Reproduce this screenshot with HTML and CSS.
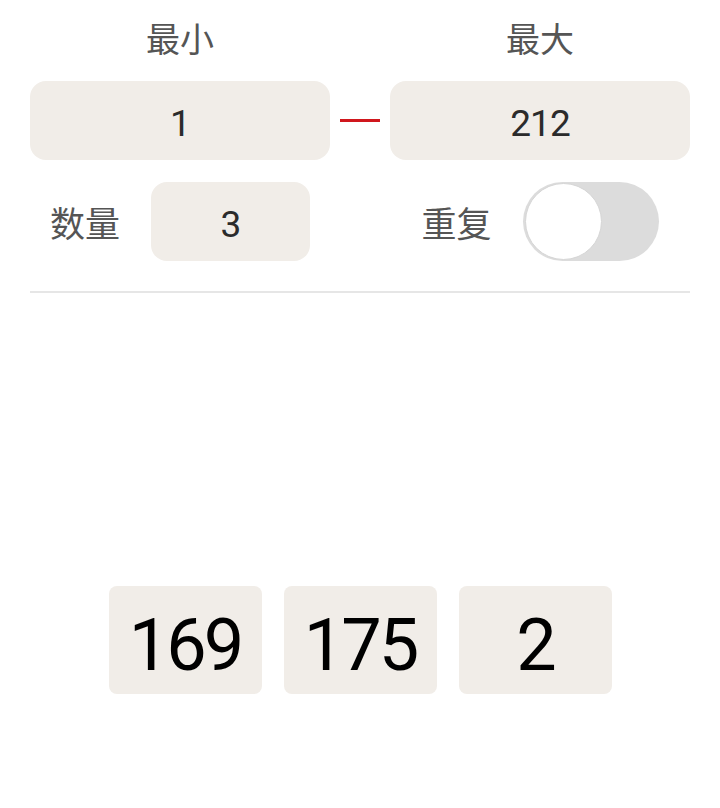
FILE: index.html
```html
<!DOCTYPE html>
<html lang="zh">
<head>
    <meta charset="UTF-8">
    <meta name="viewport" content="width=device-width, initial-scale=1.0">
    <title>随机数</title>
    <link rel="stylesheet" href="styles.css">
</head>
<body>
    <div class="settings">
        <div class="range-labels">
            <div class="range-label">最小</div>
            <div></div>
            <div class="range-label">最大</div>
        </div>
        <div class="range-inputs">
            <div class="field">1</div>
            <div class="dash"></div>
            <div class="field">212</div>
        </div>
        <div class="options">
            <div class="option">
                <span class="option-label">数量</span>
                <div class="field count">3</div>
            </div>
            <div></div>
            <div class="option">
                <span class="option-label">重复</span>
                <div class="switch"><div class="knob"></div></div>
            </div>
        </div>
        <div class="divider"></div>
    </div>

    <div class="results">
        <div class="result">169</div>
        <div class="result">175</div>
        <div class="result">2</div>
    </div>
</body>
</html>
```

FILE: styles.css
```css
body {
    margin: 0;
    padding: 0;
    background: #ffffff;
    font-family: Roboto, "Noto Sans CJK SC", sans-serif;
    color: #333;
}

.settings {
    padding: 20px 30px 0;
}

.range-labels,
.range-inputs,
.options {
    display: grid;
    grid-template-columns: 300px 60px 300px;
}

.range-label {
    text-align: center;
    font-size: 34px;
    line-height: 40px;
    color: #555;
}

.range-inputs {
    margin-top: 21px;
    align-items: center;
}

.field {
    height: 79px;
    padding-top: 5px;
    box-sizing: border-box;
    background-color: #f1ede8;
    border-radius: 16px;
    display: flex;
    align-items: center;
    justify-content: center;
    font-size: 37px;
    letter-spacing: -1px;
    color: #2b2b2b;
}

.dash {
    height: 3px;
    margin: 0 10px;
    background-color: #d0171d;
}

.options {
    margin-top: 22px;
}

.option {
    display: flex;
    align-items: center;
    justify-content: center;
    gap: 31px;
}

.option-label {
    font-size: 35px;
    color: #555;
}

.count {
    width: 159px;
}

.switch {
    width: 136px;
    height: 79px;
    border-radius: 40px;
    background-color: #dcdcdc;
    display: flex;
    align-items: center;
    padding-left: 2px;
    box-sizing: border-box;
}

.knob {
    width: 75px;
    height: 75px;
    border-radius: 50%;
    background: #ffffff;
    border: 1px solid #d6d6d6;
}

.divider {
    height: 2px;
    background-color: #e6e6e6;
    margin-top: 30px;
}

.results {
    display: flex;
    justify-content: center;
    gap: 22px;
    margin-top: 293px;
}

.result {
    width: 153px;
    height: 108px;
    padding-top: 10px;
    box-sizing: border-box;
    border-radius: 8px;
    background-color: #f1ede8;
    display: flex;
    align-items: center;
    justify-content: center;
    font-size: 72px;
    letter-spacing: -3px;
    color: #000;
}
```
